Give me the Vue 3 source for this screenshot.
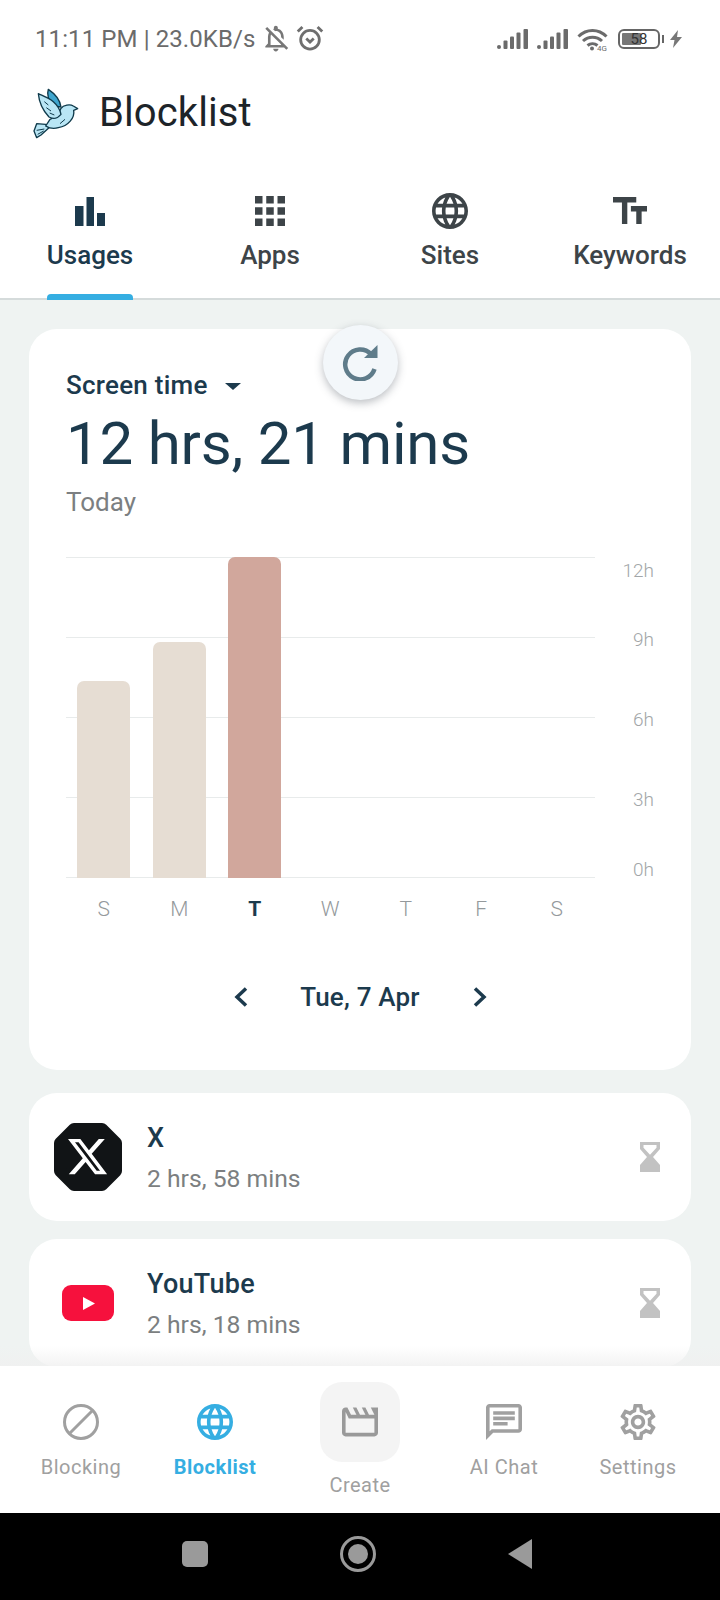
<template>
  <div class="screen">
    <!-- Status bar -->
    <div class="status-bar">
      <div class="status-left">
        <span class="status-text">11:11 PM | 23.0KB/s</span>
        <svg class="bell" viewBox="3 2 19 21"><path :d="icons.bellOff" /></svg>
        <svg class="alarm" viewBox="0 0 24 24">
          <circle cx="12" cy="13.5" r="8" />
          <path d="M1.5 6.500 5.500 2.500M22.500 6.500l-4-4M8.800 12.500l3.200 3 3.200-3" />
        </svg>
      </div>
      <div class="status-right">
        <svg v-for="n in 2" :key="n" class="signal" viewBox="0 0 31 20">
          <rect x="0" y="16" width="4" height="4" rx="2" />
          <rect x="6.5" y="11.5" width="4" height="8.5" rx="1" />
          <rect x="13" y="7.5" width="4" height="12.5" rx="1" />
          <rect x="19.5" y="3.5" width="4" height="16.5" rx="1" />
          <rect x="26.5" y="0" width="4.5" height="20" rx="1" />
        </svg>
        <svg class="wifi" viewBox="0 0 31 23">
          <path d="M1.500 8.500C9.500 .5 21.500 .5 29.500 8.500M6 13c5.500-5 13.500-5 19 0M10.500 17.500c3-2.500 7-2.500 10 0" />
          <circle cx="15" cy="20.500" r="2" />
          <text x="20" y="22.500">4G</text>
        </svg>
        <div class="battery">
          <div class="battery-fill"></div>
          <span class="battery-text">58</span>
        </div>
        <div class="battery-nub"></div>
        <svg class="bolt" viewBox="0 0 12 18"><path d="M8 0 0 10h4.500L3 18l9-11H7z" /></svg>
      </div>
    </div>

    <!-- Cabecera -->
    <div class="header">
      <svg class="logo" viewBox="0 0 195 195">
        <path class="logo-dark" d="M70 25C85 35 105 55 108 78L85 75C70 60 65 40 70 25Z" />
        <path d="M62 130 35 128 27 150 35 170 48 162 72 140Z" />
        <path d="M108 82C115 72 135 68 145 75L158 83 146 88C150 110 130 135 100 140 85 145 70 140 62 135L75 115C85 112 100 105 108 82Z" />
        <path d="M40 38C55 45 70 50 85 62 100 75 105 85 108 100 95 115 85 115 72 108 55 90 42 62 40 38Z" />
        <path class="logo-line" d="M58 62 70 72M64 80 78 90M74 96 88 102M35 148 58 144M38 160 56 150M120 115 105 128" />
      </svg>
      <span class="title">Blocklist</span>
    </div>

    <!-- Tabs -->
    <div class="tabs">
      <div v-for="tab in tabs" :key="tab.label" :class="['tab', { 'tab-active': tab.active }]">
        <div class="tab-icon-box">
          <svg :class="tab.cls" :viewBox="tab.box"><path :d="tab.d" /></svg>
        </div>
        <span class="tab-label">{{ tab.label }}</span>
        <div v-if="tab.active" class="tab-line"></div>
      </div>
    </div>

    <!-- Contenido -->
    <div class="content">
      <div class="card chart-card">
        <div class="refresh">
          <svg viewBox="0 0 36 36">
            <path class="refresh-arc" d="M29 9A15 15 0 1 0 32.500 24" />
            <path d="M35.500 0V13H22z" />
          </svg>
        </div>
        <div class="dropdown">
          Screen time
          <span class="caret"></span>
        </div>
        <div class="total">12 hrs, 21 mins</div>
        <div class="today">Today</div>

        <div class="chart">
          <div class="plot">
            <div class="grid-lines">
              <div v-for="n in 5" :key="n" class="grid-line"></div>
            </div>
            <div class="bars">
              <div v-for="(bar, i) in bars" :key="i" class="bar-slot">
                <div
                  v-if="bar.hours"
                  :class="['bar', { 'bar-active': bar.active }]"
                  :style="{ height: barHeight(bar.hours) }"
                ></div>
              </div>
            </div>
            <div class="days">
              <span v-for="(bar, i) in bars" :key="i" :class="{ 'day-active': bar.active }">{{ bar.day }}</span>
            </div>
          </div>
          <div class="y-axis">
            <span v-for="tick in ticks" :key="tick.label" :style="{ top: tick.top + 'px' }">{{ tick.label }}</span>
          </div>
        </div>

        <div class="date-row">
          <svg class="chevron" viewBox="0 0 14 20"><path d="M12 1.500 3 10l9 8.500" /></svg>
          <span class="date">Tue, 7 Apr</span>
          <svg class="chevron" viewBox="0 0 14 20"><path d="M2 1.500 11 10l-9 8.500" /></svg>
        </div>
      </div>

      <div class="card app-row">
        <div class="app-icon">
          <svg class="x-logo" viewBox="0 0 68 68">
            <path class="x-shape" d="M20 6h28l14 14v28L48 62H20L6 48V20z" />
            <path class="x-mark" transform="translate(14 14) scale(1.63)" d="M18.901 1.153h3.68l-8.04 9.19L24 22.846h-7.406l-5.8-7.584-6.638 7.584H.474l8.6-9.83L0 1.154h7.594l5.243 6.932ZM17.61 20.644h2.039L6.486 3.24H4.298Z" />
          </svg>
        </div>
        <div class="app-info">
          <div class="app-name">X</div>
          <div class="app-time">2 hrs, 58 mins</div>
        </div>
        <svg class="hourglass" viewBox="0 0 20 30"><path fill-rule="evenodd" :d="icons.hourglass" /></svg>
      </div>

      <div class="card app-row app-row-last">
        <div class="app-icon">
          <svg class="yt-logo" viewBox="0 0 52 36">
            <rect width="52" height="36" rx="9" />
            <path d="M21 12v13l12-6.500z" />
          </svg>
        </div>
        <div class="app-info">
          <div class="app-name">YouTube</div>
          <div class="app-time">2 hrs, 18 mins</div>
        </div>
        <svg class="hourglass" viewBox="0 0 20 30"><path fill-rule="evenodd" :d="icons.hourglass" /></svg>
      </div>

      <div class="fade"></div>
    </div>

    <!-- Navegacion inferior -->
    <div class="bottom-nav">
      <div v-for="item in nav" :key="item.label" :class="['nav-item', { 'nav-active': item.active, 'nav-create': item.tile }]">
        <div v-if="item.tile" class="nav-tile">
          <svg class="nav-icon movie" :viewBox="item.box"><path :d="item.d" /></svg>
        </div>
        <svg v-else-if="item.block" class="nav-icon block" viewBox="0 0 36 36">
          <circle cx="18" cy="18" r="16.500" />
          <path d="M7 29 29 7" />
        </svg>
        <svg v-else class="nav-icon" :viewBox="item.box"><path :d="item.d" /></svg>
        <span class="nav-label">{{ item.label }}</span>
      </div>
    </div>

    <!-- Botones del sistema -->
    <div class="system-bar">
      <div class="sys-square"></div>
      <div class="sys-home"><div class="sys-dot"></div></div>
      <svg class="sys-back" viewBox="0 0 26 32"><path d="M25 1v30L1 16z" /></svg>
    </div>
  </div>
</template>

<script setup>
const globe = 'M11.99 2C6.47 2 2 6.48 2 12s4.47 10 9.99 10C17.52 22 22 17.52 22 12S17.52 2 11.99 2zm6.93 6h-2.95c-.32-1.25-.78-2.45-1.38-3.56 1.84.63 3.37 1.91 4.33 3.56zM12 4.04c.83 1.2 1.48 2.53 1.91 3.96h-3.82c.43-1.43 1.08-2.76 1.91-3.96zM4.26 14C4.1 13.36 4 12.69 4 12s.1-1.36.26-2h3.38c-.08.66-.14 1.32-.14 2 0 .68.06 1.34.14 2H4.26zm.82 2h2.95c.32 1.25.78 2.45 1.38 3.56-1.84-.63-3.37-1.9-4.33-3.56zm2.95-8H5.08c.96-1.66 2.49-2.93 4.33-3.56C8.81 5.55 8.35 6.75 8.03 8zM12 19.96c-.83-1.2-1.48-2.53-1.91-3.96h3.82c-.43 1.43-1.08 2.76-1.91 3.96zM14.34 14H9.66c-.09-.66-.16-1.32-.16-2 0-.68.07-1.35.16-2h4.68c.09.65.16 1.32.16 2 0 .68-.07 1.34-.16 2zm.25 5.56c.6-1.11 1.06-2.31 1.38-3.56h2.95c-.96 1.65-2.49 2.93-4.33 3.56zM16.36 14c.08-.66.14-1.32.14-2 0-.68-.06-1.34-.14-2h3.38c.16.64.26 1.31.26 2s-.1 1.36-.26 2h-3.38z'

const icons = {
  bellOff: 'M12 22c1.1 0 2-.9 2-2h-4c0 1.1.9 2 2 2zm0-15.500c2.490 0 4 2.020 4 4.500v.1l2 2V11c0-3.070-1.630-5.640-4.500-6.320V4c0-.83-.67-1.500-1.500-1.500s-1.500.67-1.500 1.500v.68c-.24.06-.47.15-.69.23l1.640 1.640c.18-.02.36-.05.55-.05zM5.410 3.350L4 4.760l2.810 2.810C6.290 8.570 6 9.740 6 11v5l-2 2v1h14.240l1.740 1.740 1.410-1.410L5.410 3.350zM16 17H8v-6c0-.68.12-1.320.34-1.900L16 16.760V17z',
  hourglass: 'M0 0h20v7l-7 8 7 8v7H0v-7l7-8-7-8zM3.500 3v2.800L10 12.800l6.500-7V3z',
}

const tabs = [
  { label: 'Usages', active: true, box: '0 0 30 29', cls: 'ic-bars', d: 'M0 9h8.500v20H0zM11.500 0h7.500v29h-7.500zM22 16h8v13h-8z' },
  { label: 'Apps', box: '4 4 16 16', cls: 'ic-apps', d: 'M4 8h4V4H4v4zm6 12h4v-4h-4v4zm-6 0h4v-4H4v4zm0-6h4v-4H4v4zm6 0h4v-4h-4v4zm6-10v4h4V4h-4zm-6 4h4V4h-4v4zm6 6h4v-4h-4v4zm0 6h4v-4h-4v4z' },
  { label: 'Sites', box: '2 2 20 20', cls: 'ic-globe', d: globe },
  { label: 'Keywords', box: '2.5 4 19 15', cls: 'ic-text', d: 'M2.5 4v3h5v12h3V7h5V4h-13zm19 5h-9v3h3v7h3v-7h3V9z' },
]

const bars = [
  { day: 'S', hours: 7.37 },
  { day: 'M', hours: 8.83 },
  { day: 'T', hours: 12.35, active: true },
  { day: 'W' },
  { day: 'T' },
  { day: 'F' },
  { day: 'S' },
]

const ticks = [
  { label: '12h', top: 3 },
  { label: '9h', top: 72 },
  { label: '6h', top: 152 },
  { label: '3h', top: 232 },
  { label: '0h', top: 302 },
]

const nav = [
  { label: 'Blocking', block: true },
  { label: 'Blocklist', active: true, box: '2 2 20 20', d: globe },
  { label: 'Create', tile: true, box: '2 4 20 16', d: 'M4 6.47 5.76 10H20v8H4V6.47M22 4h-4l2 4h-3l-2-4h-2l2 4h-3l-2-4H8l2 4H7L5 4H4c-1.1 0-1.99.9-1.99 2L2 18c0 1.1.9 2 2 2h16c1.1 0 2-.9 2-2V4z' },
  { label: 'AI Chat', box: '2 2 20 20', d: 'M20 2H4c-1.1 0-2 .9-2 2v18l4-4h14c1.1 0 2-.9 2-2V4c0-1.1-.9-2-2-2zm0 14H5.17L4 17.17V4h16v12zM6 12h8v2H6zM6 9h12v2H6zM6 6h12v2H6z' },
  { label: 'Settings', box: '2 2 20 20', d: 'M19.43 12.98c.04-.32.07-.64.07-.98 0-.34-.03-.66-.07-.98l2.11-1.65c.19-.15.24-.42.12-.64l-2-3.46c-.09-.16-.26-.25-.44-.25-.06 0-.12.01-.17.03l-2.49 1c-.52-.4-1.08-.73-1.69-.98l-.38-2.65C14.46 2.18 14.25 2 14 2h-4c-.25 0-.46.18-.49.42l-.38 2.65c-.61.25-1.17.59-1.69.98l-2.49-1c-.06-.02-.12-.03-.18-.03-.17 0-.34.09-.43.25l-2 3.46c-.13.22-.07.49.12.64l2.11 1.65c-.04.32-.07.65-.07.98 0 .33.03.66.07.98l-2.11 1.65c-.19.15-.24.42-.12.64l2 3.46c.09.16.26.25.44.25.06 0 .12-.01.17-.03l2.49-1c.52.4 1.08.73 1.69.98l.38 2.65c.03.24.24.42.49.42h4c.25 0 .46-.18.49-.42l.38-2.65c.61-.25 1.17-.59 1.69-.98l2.49 1c.06.02.12.03.18.03.17 0 .34-.09.43-.25l2-3.46c.12-.22.07-.49-.12-.64l-2.11-1.65zm-1.98-1.71c.04.31.05.52.05.73 0 .21-.02.43-.05.73l-.14 1.13.89.7 1.08.84-.7 1.21-1.27-.51-1.04-.42-.9.68c-.43.32-.84.56-1.25.73l-1.06.43-.16 1.13-.2 1.35h-1.4l-.19-1.35-.16-1.13-1.06-.43c-.43-.18-.83-.41-1.23-.71l-.91-.7-1.06.43-1.27.51-.7-1.21 1.08-.84.89-.7-.14-1.13c-.03-.31-.05-.54-.05-.74s.02-.43.05-.73l.14-1.13-.89-.7-1.08-.84.7-1.21 1.27.51 1.04.42.9-.68c.43-.32.84-.56 1.25-.73l1.06-.43.16-1.13.2-1.35h1.39l.19 1.35.16 1.13 1.06.43c.43.18.83.41 1.23.71l.91.7 1.06-.43 1.27-.51.7 1.21-1.07.85-.89.7.14 1.13zM12 8c-2.21 0-4 1.79-4 4s1.79 4 4 4 4-1.79 4-4-1.79-4-4-4zm0 6c-1.1 0-2-.9-2-2s.9-2 2-2 2 .9 2 2-.9 2-2 2z' },
]

// Altura de barra, el tope es 12h
function barHeight(hours) {
  return (Math.min(hours, 12) / 12) * 100 + '%'
}
</script>

<style>
body {
  background: #fff;
}
</style>

<style scoped>
.screen {
  width: 720px;
  height: 1600px;
  display: flex;
  flex-direction: column;
  overflow: hidden;
  background: #fff;
  font-family: Roboto, "Liberation Sans", sans-serif;
  color: #1c3a4d;
}

/* Status bar */
.status-bar {
  height: 78px;
  flex: none;
  display: flex;
  align-items: center;
  justify-content: space-between;
  padding: 0 38px 0 35px;
  color: #6b6b6b;
}
.status-left,
.status-right {
  display: flex;
  align-items: center;
}
.status-text {
  font-size: 24px;
  letter-spacing: 0.1px;
}
.bell {
  width: 25px;
  height: 28px;
  margin-left: 8px;
  fill: #777;
}
.alarm {
  width: 28px;
  height: 28px;
  margin: -2px 0 0 7px;
  fill: none;
  stroke: #6f6f6f;
  stroke-width: 2.4;
}
.signal {
  width: 31px;
  height: 20px;
  margin-right: 9px;
  fill: #6b6b6b;
}
.wifi {
  width: 31px;
  height: 23px;
  fill: #6b6b6b;
}
.wifi path {
  fill: none;
  stroke: #6b6b6b;
  stroke-width: 3;
}
.wifi text {
  font-size: 8px;
  font-family: Roboto, sans-serif;
}
.battery {
  position: relative;
  width: 42px;
  height: 20px;
  margin-left: 10px;
  box-sizing: border-box;
  border: 2px solid #666;
  border-radius: 6px;
  padding: 2px;
}
.battery-fill {
  width: 55%;
  height: 100%;
  background: #777;
  border-radius: 1px;
}
.battery-text {
  position: absolute;
  inset: 0;
  text-align: center;
  font-size: 15px;
  line-height: 16px;
  color: #333;
}
.battery-nub {
  width: 2px;
  height: 8px;
  margin-left: 2px;
  background: #666;
}
.bolt {
  width: 12px;
  height: 18px;
  margin-left: 6px;
  fill: #777;
}

/* Cabecera */
.header {
  height: 70px;
  flex: none;
  display: flex;
  align-items: center;
  padding-left: 25px;
}
.logo {
  width: 65px;
  height: 65px;
  fill: #b9e6f5;
  stroke: #0f3a4b;
  stroke-width: 4;
  stroke-linejoin: round;
}
.logo-dark {
  fill: #3fa6cf;
}
.logo-line {
  fill: none;
  stroke-width: 3;
}
.title {
  margin: -2px 0 0 9px;
  font-size: 40px;
  letter-spacing: 0.1px;
  color: #1d2429;
}

/* Tabs */
.tabs {
  height: 152px;
  flex: none;
  display: grid;
  grid-template-columns: repeat(4, 180px);
  box-sizing: border-box;
  border-bottom: 2px solid #d5dbdb;
}
.tab {
  position: relative;
  display: flex;
  flex-direction: column;
  align-items: center;
  padding-top: 45px;
  color: #3d4448;
}
.tab-active {
  color: #1c3a4d;
}
.tab-icon-box {
  height: 36px;
  display: flex;
  align-items: center;
  justify-content: center;
}
.tab-icon-box svg {
  fill: currentColor;
}
.ic-bars {
  width: 30px;
  height: 29px;
}
.ic-apps {
  width: 30px;
  height: 30px;
}
.ic-globe {
  width: 36px;
  height: 36px;
}
.ic-text {
  width: 34px;
  height: 27px;
  margin-top: -1px;
}
.tab-label {
  margin-top: 11px;
  font-size: 26px;
  font-weight: 500;
  line-height: 30px;
}
.tab-line {
  position: absolute;
  left: 47px;
  bottom: -2px;
  width: 86px;
  height: 6px;
  border-radius: 4px 4px 0 0;
  background: #35aee2;
}

/* Contenido */
.content {
  position: relative;
  flex: 1;
  min-height: 0;
  overflow: hidden;
  padding: 29px 29px 0;
  background: #eff3f2;
}
.card {
  background: #fff;
  border-radius: 28px;
}
.chart-card {
  position: relative;
  box-sizing: border-box;
  height: 741px;
  padding: 42px 0 0 37px;
}
.refresh {
  position: absolute;
  left: 294px;
  top: -4px;
  width: 75px;
  height: 75px;
  display: flex;
  align-items: center;
  justify-content: center;
  border-radius: 50%;
  background: #f3f7fa;
  box-shadow: 0 3px 8px rgba(60, 70, 80, 0.35);
}
.refresh svg {
  width: 36px;
  height: 36px;
  margin-left: -2px;
  fill: #5f7c8a;
}
.refresh-arc {
  fill: none;
  stroke: #5f7c8a;
  stroke-width: 4.5;
}
.dropdown {
  display: flex;
  align-items: center;
  font-size: 26px;
  line-height: 28px;
  font-weight: 500;
  letter-spacing: 0.25px;
}
.caret {
  width: 0;
  height: 0;
  margin: 2px 0 0 17px;
  border-left: 8px solid transparent;
  border-right: 8px solid transparent;
  border-top: 7px solid #1c3a4d;
}
.total {
  margin-top: 10px;
  font-size: 60px;
  line-height: 70px;
  letter-spacing: -0.2px;
}
.today {
  margin-top: 9px;
  font-size: 26px;
  line-height: 28px;
  color: #7c7f81;
}

/* Grafica */
.chart {
  position: relative;
  margin-top: 41px;
  display: flex;
}
.plot {
  position: relative;
  width: 528.5px;
}
.grid-lines {
  position: absolute;
  left: 0;
  right: 0;
  top: 0;
  height: 321px;
  display: flex;
  flex-direction: column;
  justify-content: space-between;
}
.grid-line {
  height: 1px;
  background: #e8ebeb;
}
.bars,
.days {
  position: relative;
  display: grid;
  grid-template-columns: repeat(7, 1fr);
}
.bars {
  height: 321px;
}
.bar-slot {
  display: flex;
  align-items: flex-end;
  justify-content: center;
}
.bar {
  width: 53px;
  border-radius: 7px 7px 0 0;
  background: #e6ddd3;
}
.bar-active {
  background: #d1a79c;
}
.days {
  margin-top: 19px;
  text-align: center;
  font-size: 21px;
  font-weight: 300;
  line-height: 24px;
  color: #94999c;
}
.day-active {
  font-weight: 700;
  color: #1c3a4d;
}
.y-axis {
  position: relative;
  flex: 1;
  font-size: 19px;
  font-weight: 300;
  line-height: 22px;
  color: #a2a6a8;
}
.y-axis span {
  position: absolute;
  right: 37px;
}

/* Fecha */
.date-row {
  display: flex;
  align-items: center;
  justify-content: center;
  margin: 61px 0 0 -37px;
}
.date {
  width: 225px;
  text-align: center;
  font-size: 26px;
  line-height: 30px;
  font-weight: 500;
  letter-spacing: 0.2px;
}
.chevron {
  width: 14px;
  height: 20px;
  fill: none;
  stroke: #1c3a4d;
  stroke-width: 3.5;
}

/* Filas de apps */
.app-row {
  display: flex;
  align-items: center;
  height: 128px;
  margin-top: 23px;
  padding: 0 31px 0 25px;
}
.app-row-last {
  margin-top: 18px;
}
.app-icon {
  width: 68px;
  height: 68px;
  flex: none;
  display: flex;
  align-items: center;
  justify-content: center;
}
.x-logo {
  width: 68px;
  height: 68px;
}
.x-shape {
  fill: #111416;
  stroke: #111416;
  stroke-width: 12;
  stroke-linejoin: round;
}
.x-mark {
  fill: #fff;
}
.yt-logo {
  width: 52px;
  height: 36px;
  fill: #f6113d;
}
.yt-logo path {
  fill: #fff;
}
.app-info {
  flex: 1;
  margin-left: 25px;
  padding-top: 2px;
}
.app-name {
  font-size: 27px;
  font-weight: 500;
  line-height: 30px;
  letter-spacing: 0.3px;
}
.app-time {
  margin-top: 12px;
  font-size: 24.7px;
  line-height: 28px;
  color: #7c7f81;
}
.hourglass {
  width: 20px;
  height: 30px;
  fill: #c2c2c2;
}
.fade {
  position: absolute;
  left: 0;
  right: 0;
  bottom: 0;
  height: 20px;
  background: linear-gradient(rgba(240, 240, 240, 0), rgba(240, 240, 240, 0.8));
}

/* Navegacion inferior */
.bottom-nav {
  height: 147px;
  flex: none;
  display: grid;
  grid-template-columns: 162px 106px 184px 104px 164px;
  background: #fff;
  color: #a0a0a0;
}
.nav-item {
  display: flex;
  flex-direction: column;
  align-items: center;
}
.nav-active {
  color: #35aee2;
}
.nav-icon {
  width: 36px;
  height: 36px;
  margin-top: 38px;
  fill: currentColor;
}
.nav-icon.block {
  fill: none;
  stroke: currentColor;
  stroke-width: 3;
}
.nav-label {
  margin-top: 15px;
  font-size: 20px;
  line-height: 24px;
  letter-spacing: 0.5px;
}
.nav-active .nav-label {
  font-weight: 700;
}
.nav-tile {
  width: 80px;
  height: 80px;
  margin-top: 16px;
  display: flex;
  align-items: center;
  justify-content: center;
  border-radius: 22px;
  background: #f4f4f4;
}
.nav-tile .movie {
  width: 36px;
  height: 30px;
  margin: 0;
  fill: #999;
}
.nav-create .nav-label {
  margin-top: 11px;
}

/* Botones del sistema */
.system-bar {
  height: 87px;
  flex: none;
  display: flex;
  align-items: center;
  justify-content: center;
  padding: 0 5px 6px 0;
  box-sizing: border-box;
  background: #000;
}
.sys-square {
  width: 26px;
  height: 26px;
  border-radius: 5px;
  background: #9a9a9a;
}
.sys-home {
  width: 36px;
  height: 36px;
  margin: 0 131px 0 132px;
  box-sizing: border-box;
  display: flex;
  align-items: center;
  justify-content: center;
  border: 3px solid #9a9a9a;
  border-radius: 50%;
}
.sys-dot {
  width: 20px;
  height: 20px;
  border-radius: 50%;
  background: #9a9a9a;
}
.sys-back {
  width: 26px;
  height: 32px;
  fill: #9a9a9a;
}
</style>
